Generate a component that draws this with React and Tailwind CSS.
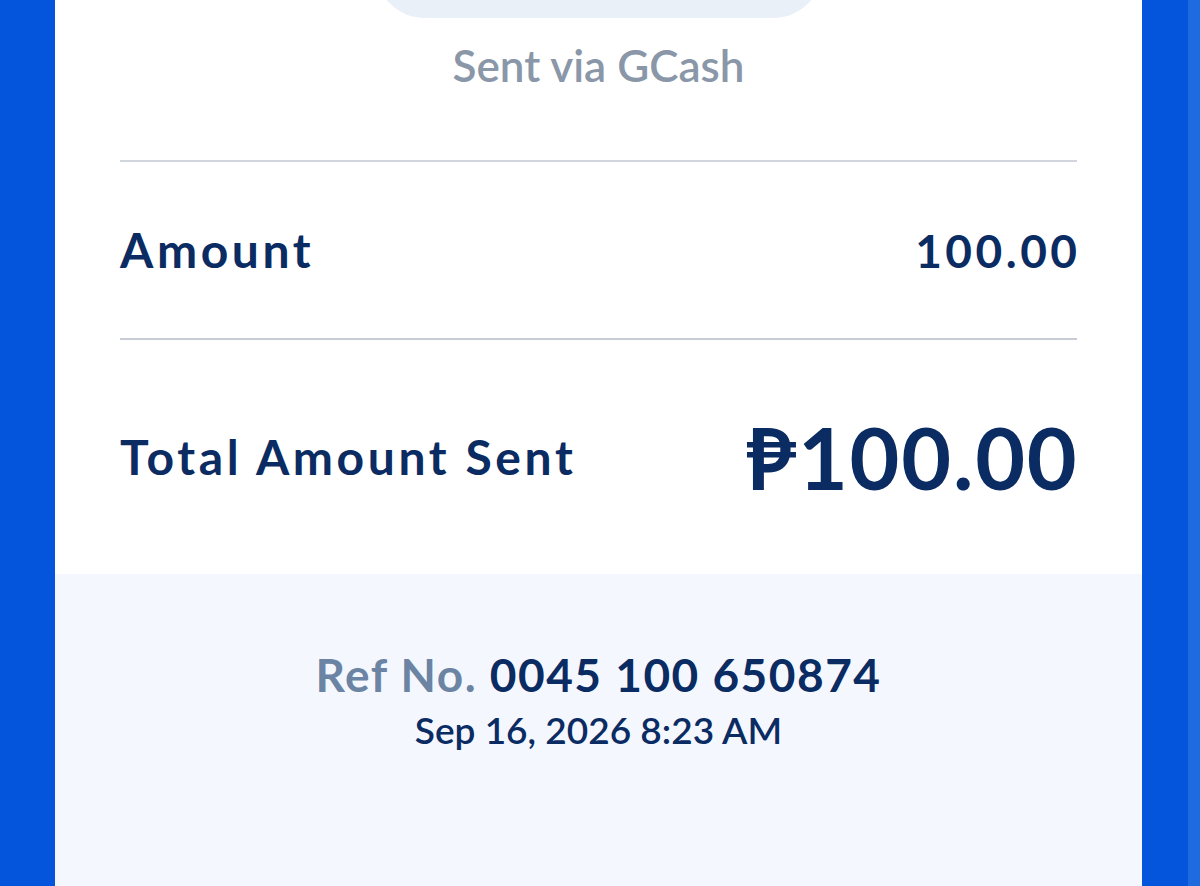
export default function App() {
  var font = { fontFamily: "Lato, 'Open Sans', sans-serif" };

  return (
    <div className="flex h-[886px] w-[1200px] overflow-hidden bg-[#0555dc]" style={font}>
      <div className="w-[55px] shrink-0 bg-[#0555dc]"></div>

      <div className="flex w-[1087px] shrink-0 flex-col bg-white">
        <div className="mx-auto h-[18px] w-[448px] overflow-hidden">
          <div className="-mt-[82px] h-[100px] w-full rounded-[50px] bg-[#eaf0f8]"></div>
        </div>

        <div className="mt-[24px] text-center text-[44px] leading-[46px] font-semibold text-[#8a97a8]">
          Sent via GCash
        </div>

        <div className="px-[65px]">
          <div className="mt-[72px] h-[2px] bg-[#d1d5dc]"></div>

          <div className="flex h-[176px] items-center justify-between text-[#0b2b63]">
            <div className="text-[48px] font-bold tracking-[3.6px]">Amount</div>
            <div className="-mr-[3.5px] text-[46px] font-bold tracking-[3.5px]">100.00</div>
          </div>

          <div className="h-[2px] bg-[#c8ccd6]"></div>

          <div className="flex h-[234px] items-center justify-between text-[#0b2b63]">
            <div className="text-[48px] font-bold tracking-[3.6px]">Total Amount Sent</div>
            <div className="-mr-[1.5px] flex items-center text-[86px] leading-none font-bold tracking-[1.8px]">
              <span>₱</span>
              <span>100.00</span>
            </div>
          </div>
        </div>

        <div className="flex flex-1 flex-col items-center bg-[#f4f8fe] pt-[76px] text-[#0b2b63]">
          <div className="text-[46px] leading-[50px] font-bold tracking-[1.5px]">
            <span className="text-[#6c84a4]">Ref No.</span> 0045 100 650874
          </div>
          <div className="mt-[8px] text-[37px] leading-[44px] font-semibold">
            Sep 16, 2026 8:23 AM
          </div>
        </div>
      </div>

      <div className="w-[46px] shrink-0 bg-[#0555dc]"></div>
      <div className="flex-1 bg-[#1e6be0]"></div>
    </div>
  );
}
